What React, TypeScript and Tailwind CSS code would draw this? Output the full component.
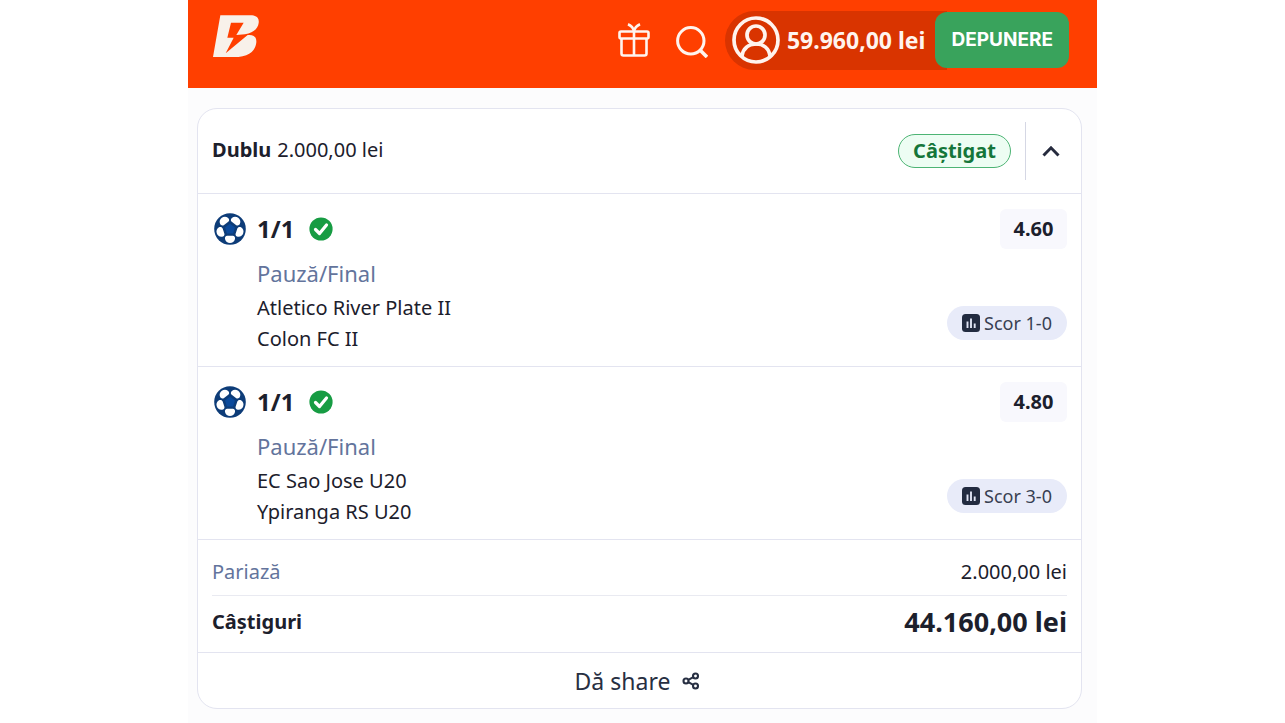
type Leg = {
  pick: string
  market: string
  teams: string[]
  odds: string
  score: string
}

const legs: Leg[] = [
  { pick: '1/1', market: 'Pauză/Final', teams: ['Atletico River Plate II', 'Colon FC II'], odds: '4.60', score: '1-0' },
  { pick: '1/1', market: 'Pauză/Final', teams: ['EC Sao Jose U20', 'Ypiranga RS U20'], odds: '4.80', score: '3-0' },
]

function Logo() {
  return (
    <svg viewBox="0 0 138 126" className="h-[42px] w-[46px]" aria-hidden="true">
      <path
        fill="#f8f1ea"
        d="M22 1H112C132 1 139 10 137 24C135 42 120 53 96 58L70 60L92 23H54L43 68H62L38 115L104 60C122 58 131 66 130 82C127 110 106 126 62 126H0Z"
      />
    </svg>
  )
}

function GiftIcon() {
  return (
    <svg viewBox="0 0 32 34" className="h-[34px] w-8" fill="none" stroke="#fff4ee" strokeWidth="2.6" strokeLinejoin="round" aria-hidden="true">
      <rect x="1.500" y="8.500" width="29" height="7" rx="1.500" />
      <path d="M3.500 15.500V30.500a2 2 0 0 0 2 2h21a2 2 0 0 0 2-2V15.500M16 8.500v24" />
      <path d="M16 8.500c-.6-3.600-2.600-5.800-6-7.300M16 8.500c.6-3.600 2.600-5.800 6-7.300" />
    </svg>
  )
}

function SearchIcon() {
  return (
    <svg viewBox="0 0 32 32" className="h-8 w-8" fill="none" stroke="#fff4ee" strokeWidth="3" aria-hidden="true">
      <circle cx="14.800" cy="14.800" r="13.200" />
      <path d="M24 24l7 7" strokeWidth="3.600" />
    </svg>
  )
}

function UserIcon() {
  return (
    <svg viewBox="0 0 48 48" className="h-12 w-12 shrink-0" fill="none" stroke="#fff4ee" strokeWidth="3.7" aria-hidden="true">
      <circle cx="24" cy="24" r="22" />
      <circle cx="24" cy="19" r="9" />
      <path d="M9.800 40.500c1.200-8 6.700-12.500 14.200-12.500s13 4.500 14.200 12.500" />
    </svg>
  )
}

function Ball() {
  return (
    <svg viewBox="0 0 32 32" className="h-8 w-8 shrink-0" aria-hidden="true">
      <circle cx="16" cy="16" r="15.800" fill="#0d3c78" />
      {[0, 72, 144, 216, 288].map((angle) => (
        <path
          key={angle}
          d="M13.200 22.800h5.600c1.600 0 2.600 1.600 2.200 3.200-.6 2.600-2.600 3.900-5 3.900s-4.400-1.300-5-3.900c-.4-1.600.6-3.200 2.200-3.200z"
          fill="#fff"
          transform={`rotate(${angle} 16 16)`}
        />
      ))}
      <path d="M16 10.800l5 3.700-1.900 5.900h-6.200l-1.900-5.900z" fill="#0b4a9c" />
    </svg>
  )
}

function CheckBadge() {
  return (
    <svg viewBox="0 0 24 24" className="h-6 w-6" role="img" aria-label="Câștigat">
      <circle cx="12" cy="12" r="11.600" fill="#179c43" />
      <path d="M6.500 12.500l4 4 7-8.500" fill="none" stroke="#fff" strokeWidth="3.200" strokeLinecap="round" strokeLinejoin="round" />
    </svg>
  )
}

function StatsIcon() {
  return (
    <svg viewBox="0 0 18 18" className="h-[18px] w-[18px]" aria-hidden="true">
      <rect width="18" height="18" rx="3.500" fill="#222b40" />
      <path d="M5.500 7.500V14M9 4.500V14M12.700 9.500V14" stroke="#dfe3f3" strokeWidth="1.900" />
    </svg>
  )
}

function ShareIcon() {
  return (
    <svg viewBox="0 0 18 18" className="h-[18px] w-[18px]" fill="none" stroke="#272f42" strokeWidth="2.100" aria-hidden="true">
      <circle cx="4" cy="9" r="2.500" />
      <circle cx="13.500" cy="4" r="2.500" />
      <circle cx="13.500" cy="14" r="2.500" />
      <path d="M6.300 7.900l5-2.700M6.300 10.100l5 2.700" />
    </svg>
  )
}

function TopBar() {
  return (
    <header className="flex h-[88px] items-center justify-between bg-[#ff3f00] pr-7 pl-[25px]">
      <a href="#" aria-label="Acasă" className="pb-4">
        <Logo />
      </a>
      <div className="flex items-center pb-2">
        <button type="button" aria-label="Bonusuri" className="mr-[26px]">
          <GiftIcon />
        </button>
        <button type="button" aria-label="Caută" className="mr-[17px] pt-1">
          <SearchIcon />
        </button>
        <div className="flex h-[59px] items-center rounded-l-full bg-[#d93400] pl-[7px]">
          <UserIcon />
          <span className="mr-[10px] ml-[7px] text-[23px] leading-8 font-bold text-[#fff4ee]">59.960,00 lei</span>
          <div className="flex h-full items-center bg-[linear-gradient(to_right,#d93400_12px,#ff3f00_12px)]">
            <button
              type="button"
              className="h-14 rounded-xl bg-[#39a35c] px-4 font-[Inter,sans-serif] text-[19px] leading-6 font-bold text-white"
            >
              DEPUNERE
            </button>
          </div>
        </div>
      </div>
    </header>
  )
}

function LegRow({ leg }: { leg: Leg }) {
  return (
    <article className="flex justify-between border-b border-[#e3e4f0] pt-[11px] pr-[14px] pb-3 pl-4">
      <div>
        <div className="flex h-12 items-center">
          <Ball />
          <h2 className="ml-[11px] w-[52px] text-[24px] leading-8 font-bold">{leg.pick}</h2>
          <CheckBadge />
        </div>
        <div className="pl-[43px]">
          <p className="h-9 pt-1 text-[22px] leading-8 text-[#63749c]">{leg.market}</p>
          <ul className="pt-[3px] text-[20px] leading-[31px]">
            {leg.teams.map((team) => (
              <li key={team}>{team}</li>
            ))}
          </ul>
        </div>
      </div>
      <div className="flex flex-col items-end justify-between pt-1 pb-[14px]">
        <span className="flex h-10 w-[67px] items-center justify-center rounded-md bg-[#f8f8fd] text-[20px] leading-8 font-bold">
          {leg.odds}
        </span>
        <button
          type="button"
          className="flex h-[34px] w-[120px] items-center justify-center gap-1 rounded-full bg-[#e8ebf9] text-[18px] leading-6 text-[#383f52]"
        >
          <StatsIcon />
          Scor {leg.score}
        </button>
      </div>
    </article>
  )
}

export default function App() {
  return (
    <div className="min-h-screen bg-white font-['Noto_Sans','Open_Sans',sans-serif] text-[#1c202c]">
      <div className="mx-auto min-h-screen w-full max-w-[909px] bg-[#fcfcfd]">
        <TopBar />
        <main className="pt-5 pr-[15px] pb-[14px] pl-[9px]">
          <section className="overflow-hidden rounded-[20px] border border-[#e3e4f0] bg-white">
            <div className="flex h-[85px] items-center justify-between border-b border-[#e3e4f0] px-[14px]">
              <h1 className="pb-[2px] text-[20px] leading-8">
                <strong className="mr-[6px] font-bold">Dublu</strong>
                2.000,00 lei
              </h1>
              <div className="flex items-center">
                <span className="flex h-[34px] w-[113px] items-center justify-center rounded-full border border-[#4db474] bg-[#edfdf3] text-[20px] leading-8 font-bold text-[#15763a]">
                  Câștigat
                </span>
                <button
                  type="button"
                  aria-label="Restrânge biletul"
                  className="ml-[14px] flex h-[58px] items-center border-l border-[#d5d7e4] pr-[7px] pl-4"
                >
                  <svg viewBox="0 0 18 12" className="h-3 w-[18px]" fill="none" stroke="#262b3e" strokeWidth="3" aria-hidden="true">
                    <path d="M1.500 10.500L9 2.800l7.500 7.700" />
                  </svg>
                </button>
              </div>
            </div>

            {legs.map((leg) => (
              <LegRow key={leg.teams[0]} leg={leg} />
            ))}

            <dl className="border-b border-[#e3e4f0] px-[14px]">
              <div className="flex h-14 items-center justify-between border-b border-[#e9eaf1] pt-2 text-[20px] leading-8">
                <dt className="text-[#63749c]">Pariază</dt>
                <dd>2.000,00 lei</dd>
              </div>
              <div className="flex h-14 items-center justify-between pb-1 text-[20px] leading-8 font-bold">
                <dt>Câștiguri</dt>
                <dd className="text-[27px]">44.160,00 lei</dd>
              </div>
            </dl>

            <button type="button" className="flex h-[55px] w-full items-center justify-center gap-3 pr-1 text-[23px] leading-8 text-[#272f42]">
              Dă share
              <ShareIcon />
            </button>
          </section>
        </main>
      </div>
    </div>
  )
}
